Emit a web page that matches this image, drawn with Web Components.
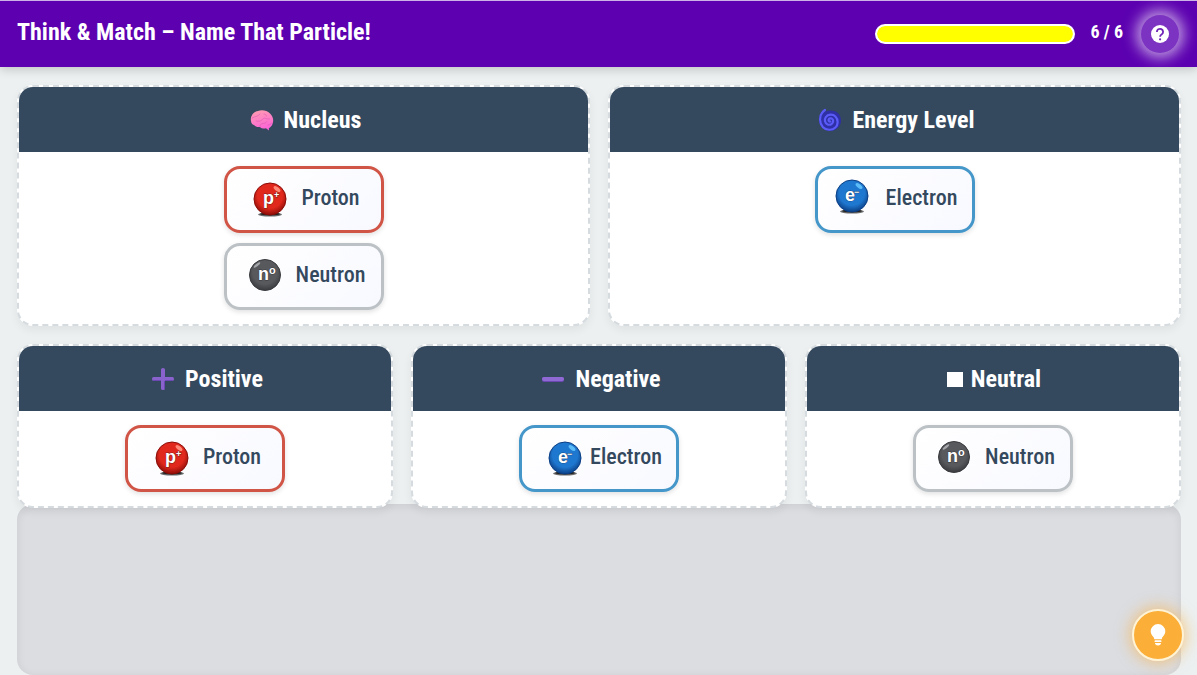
<!DOCTYPE html>
<html lang="en">
<head>
<meta charset="utf-8">
<title>Think &amp; Match</title>
<style>
  html, body { margin: 0; }
  body {
    font-family: "Roboto Condensed", Roboto, "Liberation Sans", sans-serif;
    color: #34495e;
    background: #ecf0f1;
  }
</style>
</head>
<body>
<match-game></match-game>

<script>
const define = (name, html, setup) => {
  const template = document.createElement('template');
  template.innerHTML = html;
  customElements.define(name, class extends HTMLElement {
    connectedCallback() {
      if (this.shadowRoot) return;
      const root = this.attachShadow({ mode: 'open' });
      root.append(template.content.cloneNode(true));
      if (setup) setup(this, root);
    }
  });
};

/* Score bar with its count */
define('score-meter', `
  <style>
    :host { display: flex; align-items: center; gap: 16px; }
    .track {
      box-sizing: border-box; width: 200px; height: 20px;
      border: 2px solid #fff; border-radius: 10px; overflow: hidden; background: #fff;
    }
    .fill { height: 100%; border-radius: 8px; background: #ff0; }
    .count { color: #fff; font-size: 18px; font-weight: 700; line-height: 20px; white-space: nowrap; margin-bottom: 4px; }
  </style>
  <div class="track" role="progressbar" aria-label="Matches" aria-valuemin="0"><div class="fill"></div></div>
  <div class="count"></div>
`, (host, root) => {
  const value = host.getAttribute('value'), max = host.getAttribute('max');
  const track = root.querySelector('.track');
  track.setAttribute('aria-valuenow', value);
  track.setAttribute('aria-valuemax', max);
  root.querySelector('.fill').style.width = (100 * value / max) + '%';
  root.querySelector('.count').textContent = value + ' / ' + max;
});

define('help-button', `
  <style>
    :host { display: block; }
    button {
      display: grid; place-items: center; width: 38px; height: 38px; padding: 0;
      border: 0; border-radius: 50%; background: #7d33c1; color: #fff;
      box-shadow: 0 0 14px 5px rgba(255,255,255,.6);
    }
    svg { display: block; width: 18px; height: 18px; }
  </style>
  <button type="button" aria-label="Help">
    <svg viewBox="0 0 18 18" aria-hidden="true">
      <circle cx="9" cy="9" r="9" fill="#fff"/>
      <path d="M5.900 7a3.100 3 0 1 1 4.900 2.300C9.700 10 9.100 10.400 9.100 11.800" fill="none" stroke="#6f22b6" stroke-width="1.800"/>
      <circle cx="9.100" cy="14.300" r="1.100" fill="#6f22b6"/>
    </svg>
  </button>
`);

define('hint-button', `
  <style>
    :host { display: block; }
    button {
      display: grid; place-items: center; box-sizing: border-box; width: 52px; height: 52px; padding: 0;
      border: 2px solid #fff3d6; border-radius: 50%; background: #fbae38;
      box-shadow: 0 0 14px 3px rgba(251,174,56,.5);
    }
    svg { display: block; width: 16px; height: 22px; }
  </style>
  <button type="button" aria-label="Hint">
    <svg viewBox="0 0 16 22" aria-hidden="true" fill="#fff">
      <path d="M8 0a7.300 7.300 0 0 0-7.300 7.300c0 2.400 1.200 3.900 2.300 5.200.8 1 1.200 1.700 1.300 2.800h7.400c.1-1.100.5-1.800 1.300-2.800 1.100-1.300 2.300-2.800 2.300-5.200A7.300 7.300 0 0 0 8 0z"/>
      <rect x="4.500" y="16.300" width="7" height="1.800" rx=".9"/>
      <path d="M5 19h6c0 1.600-1.200 2.400-3 2.400S5 20.600 5 19z"/>
    </svg>
  </button>
`);

define('game-header', `
  <style>
    :host { display: block; position: relative; z-index: 2; }
    header {
      display: flex; align-items: center; justify-content: space-between;
      box-sizing: border-box; height: 67px; padding: 0 18px 0 17px;
      border-top: 1px solid #cdb2e8; background: #5c00b0; color: #fff;
      box-shadow: 0 2px 10px rgba(0,0,0,.2);
    }
    h1 { margin: 0 0 4px; font-size: 24px; line-height: 28px; font-weight: 700; }
    .tools { display: flex; align-items: center; gap: 18px; }
  </style>
  <header>
    <h1><slot></slot></h1>
    <div class="tools"><slot name="tools"></slot></div>
  </header>
`);

/* Pictograms of the zone headings */
const headingIcons = {
  brain: `<svg width="32" height="24" viewBox="0 0 32 24">
    <defs><linearGradient id="b" x1="0" y1="0" x2=".3" y2="1"><stop offset="0" stop-color="#ff9fae"/><stop offset="1" stop-color="#fb66d6"/></linearGradient></defs>
    <path d="M5 13C4 8 8 3.500 12 3c4-1.500 9-.5 12 2.500 3 2.500 4 7 2.500 10.500-.8 2-2 3.500-3.700 4.200L23 22.500l-3-2.300c-2 .6-4.500.3-6-1.200-2.500.3-5-.5-6-2C6 16.500 5.200 15 5 13z" fill="url(#b)"/>
    <path d="M6 10c3-2 6-1 8-4M10 13c3 1 6-.5 8-3 2 0 3 1.500 5.500 1M14 19c-.5-2 1-3.500 3-3.500s3-1 4-2M18 6c1.500 0 2.500 1 2.500 2M22 17c1.500 0 3-.8 3.700-2" fill="none" stroke="#dc5cb4" stroke-width=".6" stroke-linecap="round"/></svg>`,
  cyclone: `<svg width="32" height="24" viewBox="0 0 32 24">
    <path d="M12 3.500C17 1 27 3 27 12.500c0 6-5 10.500-11 10.500S5 18 5 12c0-4 1-6 3-8.500z" fill="#2f2fa6"/>
    <path d="M16.300 13.500c-1.500.3-2.300-1.300-1.400-2.400 1.500-1.700 4.300-.4 4.300 2 0 2.800-3 4.300-5.500 3.300-3-1.200-3.600-4.800-1.900-7.200 2.200-3.100 7-3.300 9.600-.7 3.100 3.100 2.900 8.200 0 11-3.500 3.300-9.300 2.900-12.600-.6C5.100 14.800 5.300 8 8.300 4.500c.8-1 1.700-1.800 2.700-2.500" fill="none" stroke="#5b5cf8" stroke-width="2.200" stroke-linecap="round"/></svg>`,
  plus: `<svg width="32" height="24" viewBox="0 0 32 24">
    <path d="M14 2.500Q14 1 16 1t2 1.500V10h7.500q1.500 0 1.500 2t-1.500 2H18v7.500q0 1.500-2 1.500t-2-1.500V14H6.500Q5 14 5 12t1.500-2H14z" fill="#8a62ce"/>
    <path d="M6 13.500h8M18 13.500h8M17.500 14v8" stroke="#6c48b2" stroke-width="1" fill="none"/></svg>`,
  minus: `<svg width="32" height="24" viewBox="0 0 32 24"><rect x="5" y="10" width="22" height="5" rx="2" fill="#6c48b2"/><rect x="5" y="10" width="22" height="4" rx="2" fill="#8f6ad4"/></svg>`,
  square: `<svg width="20" height="24" viewBox="0 0 20 24"><rect x="2" y="5" width="16" height="15" fill="#fff"/></svg>`
};

define('drop-zone', `
  <style>
    :host { display: flex; flex-direction: column; }
    section {
      flex: 1; border: 2px dashed #d5dbdf; border-radius: 16px; overflow: hidden;
      background: #fff; box-shadow: 0 4px 10px rgba(0,0,0,.06);
    }
    h2 {
      display: flex; align-items: center; justify-content: center; gap: 6px;
      box-sizing: border-box; height: 65px; margin: 0; background: #34495e; color: #fff;
      font-size: 24px; line-height: 28px; font-weight: 700;
    }
    svg { display: block; }
    .cards { display: flex; flex-direction: column; align-items: center; gap: 10px; padding: 14px; }
  </style>
  <section>
    <h2><span class="icon" aria-hidden="true"></span><span class="name"></span></h2>
    <div class="cards"><slot></slot></div>
  </section>
`, (host, root) => {
  root.querySelector('.icon').innerHTML = headingIcons[host.getAttribute('icon')];
  root.querySelector('.name').textContent = host.getAttribute('name');
});

const particles = {
  proton: { name: 'Proton', edge: '#d05546', light: '#ff8a78', mid: '#e0281c', dark: '#8c0d08', letter: 'p', sign: '+', shadow: true, ball: [23, 21] },
  neutron: { name: 'Neutron', edge: '#bbc1c5', light: '#a5a6a9', mid: '#58595c', dark: '#3a3b3e', letter: 'n', sign: 'o', shadow: false, ball: [23, 20] },
  electron: { name: 'Electron', edge: '#4597c9', light: '#5cbcf8', mid: '#1f78cf', dark: '#0b3f86', letter: 'e', sign: '−', shadow: true, ball: [20, 18] }
};

define('particle-card', `
  <style>
    :host { display: block; }
    .card {
      display: flex; align-items: center; justify-content: center; gap: 10px;
      box-sizing: border-box; width: 160px; height: 67px;
      border: 3px solid var(--edge); border-radius: 16px;
      background: linear-gradient(135deg, #fff, #f8f9ff);
      box-shadow: 0 2px 5px rgba(0,0,0,.12);
    }
    .name { font-size: 22px; line-height: 24px; font-weight: 500; margin-bottom: 4px; }
    svg { display: block; flex: none; overflow: visible; }
    text { font-family: "Liberation Sans", sans-serif; font-weight: 700; fill: #fff; paint-order: stroke; stroke: rgba(20,20,30,.5); stroke-width: 1px; }
  </style>
  <div class="card"><span class="ball"></span><span class="name"></span></div>
`, (host, root) => {
  const p = particles[host.getAttribute('kind')];
  const [x, y] = (host.getAttribute('ball') || p.ball.join()).split(',').map(Number);
  root.querySelector('.card').style.setProperty('--edge', p.edge);
  root.querySelector('.name').textContent = p.name;
  root.querySelector('.ball').innerHTML = `
    <svg width="44" height="44" viewBox="0 0 44 44" role="img" aria-label="${p.name}">
      <defs><radialGradient id="g" cx=".5" cy=".4" r=".6">
        <stop offset="0" stop-color="${p.mid}"/><stop offset=".65" stop-color="${p.mid}"/><stop offset="1" stop-color="${p.dark}"/>
      </radialGradient></defs>
      <g transform="translate(${x} ${y})">
        ${p.shadow ? '<ellipse cx="0" cy="15.500" rx="12" ry="2" fill="#222a"/><ellipse cx="0" cy="15" rx="10" ry="1.500" fill="#222"/>' : ''}
        <circle r="${p.shadow ? 16 : 15.5}" fill="url(#g)" stroke="${p.dark}" stroke-width="1"/>
        <ellipse cx="${p.shadow ? 7 : -8}" cy="-10" rx="4" ry="${p.shadow ? 2 : 1.2}" transform="rotate(${p.shadow ? 38 : -38} ${p.shadow ? 7 : -8} -10)" fill="${p.light}"/>
        <text x="-7" y="5" font-size="18">${p.letter}</text>
        <text x="${p.letter === 'e' ? 2 : 4}" y="-1" font-size="${p.letter === 'n' ? 11 : 9}">${p.sign}</text>
      </g>
    </svg>`;
});

define('match-game', `
  <style>
    :host { display: flex; flex-direction: column; min-height: 100vh; }
    main { flex: 1; display: flex; flex-direction: column; padding: 18px 16px 0 17px; }
    .zones { position: relative; z-index: 1; display: grid; gap: 18px; }
    .row { display: grid; gap: 18px; grid-auto-flow: column; grid-auto-columns: minmax(0, 1fr); }
    .tray {
      flex: 1; margin-top: -4px; border-radius: 16px; background: #dcdde1;
      box-shadow: inset 0 2px 10px rgba(0,0,0,.08);
    }
    hint-button { position: fixed; z-index: 3; right: 13px; bottom: 14px; }
  </style>
  <game-header>Think &amp; Match – Name That Particle!
    <score-meter slot="tools" value="6" max="6"></score-meter>
    <help-button slot="tools"></help-button>
  </game-header>
  <main>
    <div class="zones">
      <div class="row">
        <drop-zone icon="brain" name="Nucleus">
          <particle-card kind="proton"></particle-card>
          <particle-card kind="neutron"></particle-card>
        </drop-zone>
        <drop-zone icon="cyclone" name="Energy Level">
          <particle-card kind="electron"></particle-card>
        </drop-zone>
      </div>
      <div class="row">
        <drop-zone icon="plus" name="Positive"><particle-card kind="proton"></particle-card></drop-zone>
        <drop-zone icon="minus" name="Negative"><particle-card kind="electron" ball="29,21"></particle-card></drop-zone>
        <drop-zone icon="square" name="Neutral"><particle-card kind="neutron"></particle-card></drop-zone>
      </div>
    </div>
    <div class="tray" aria-label="Particles left to place"></div>
  </main>
  <hint-button></hint-button>
`);
</script>
</body>
</html>
